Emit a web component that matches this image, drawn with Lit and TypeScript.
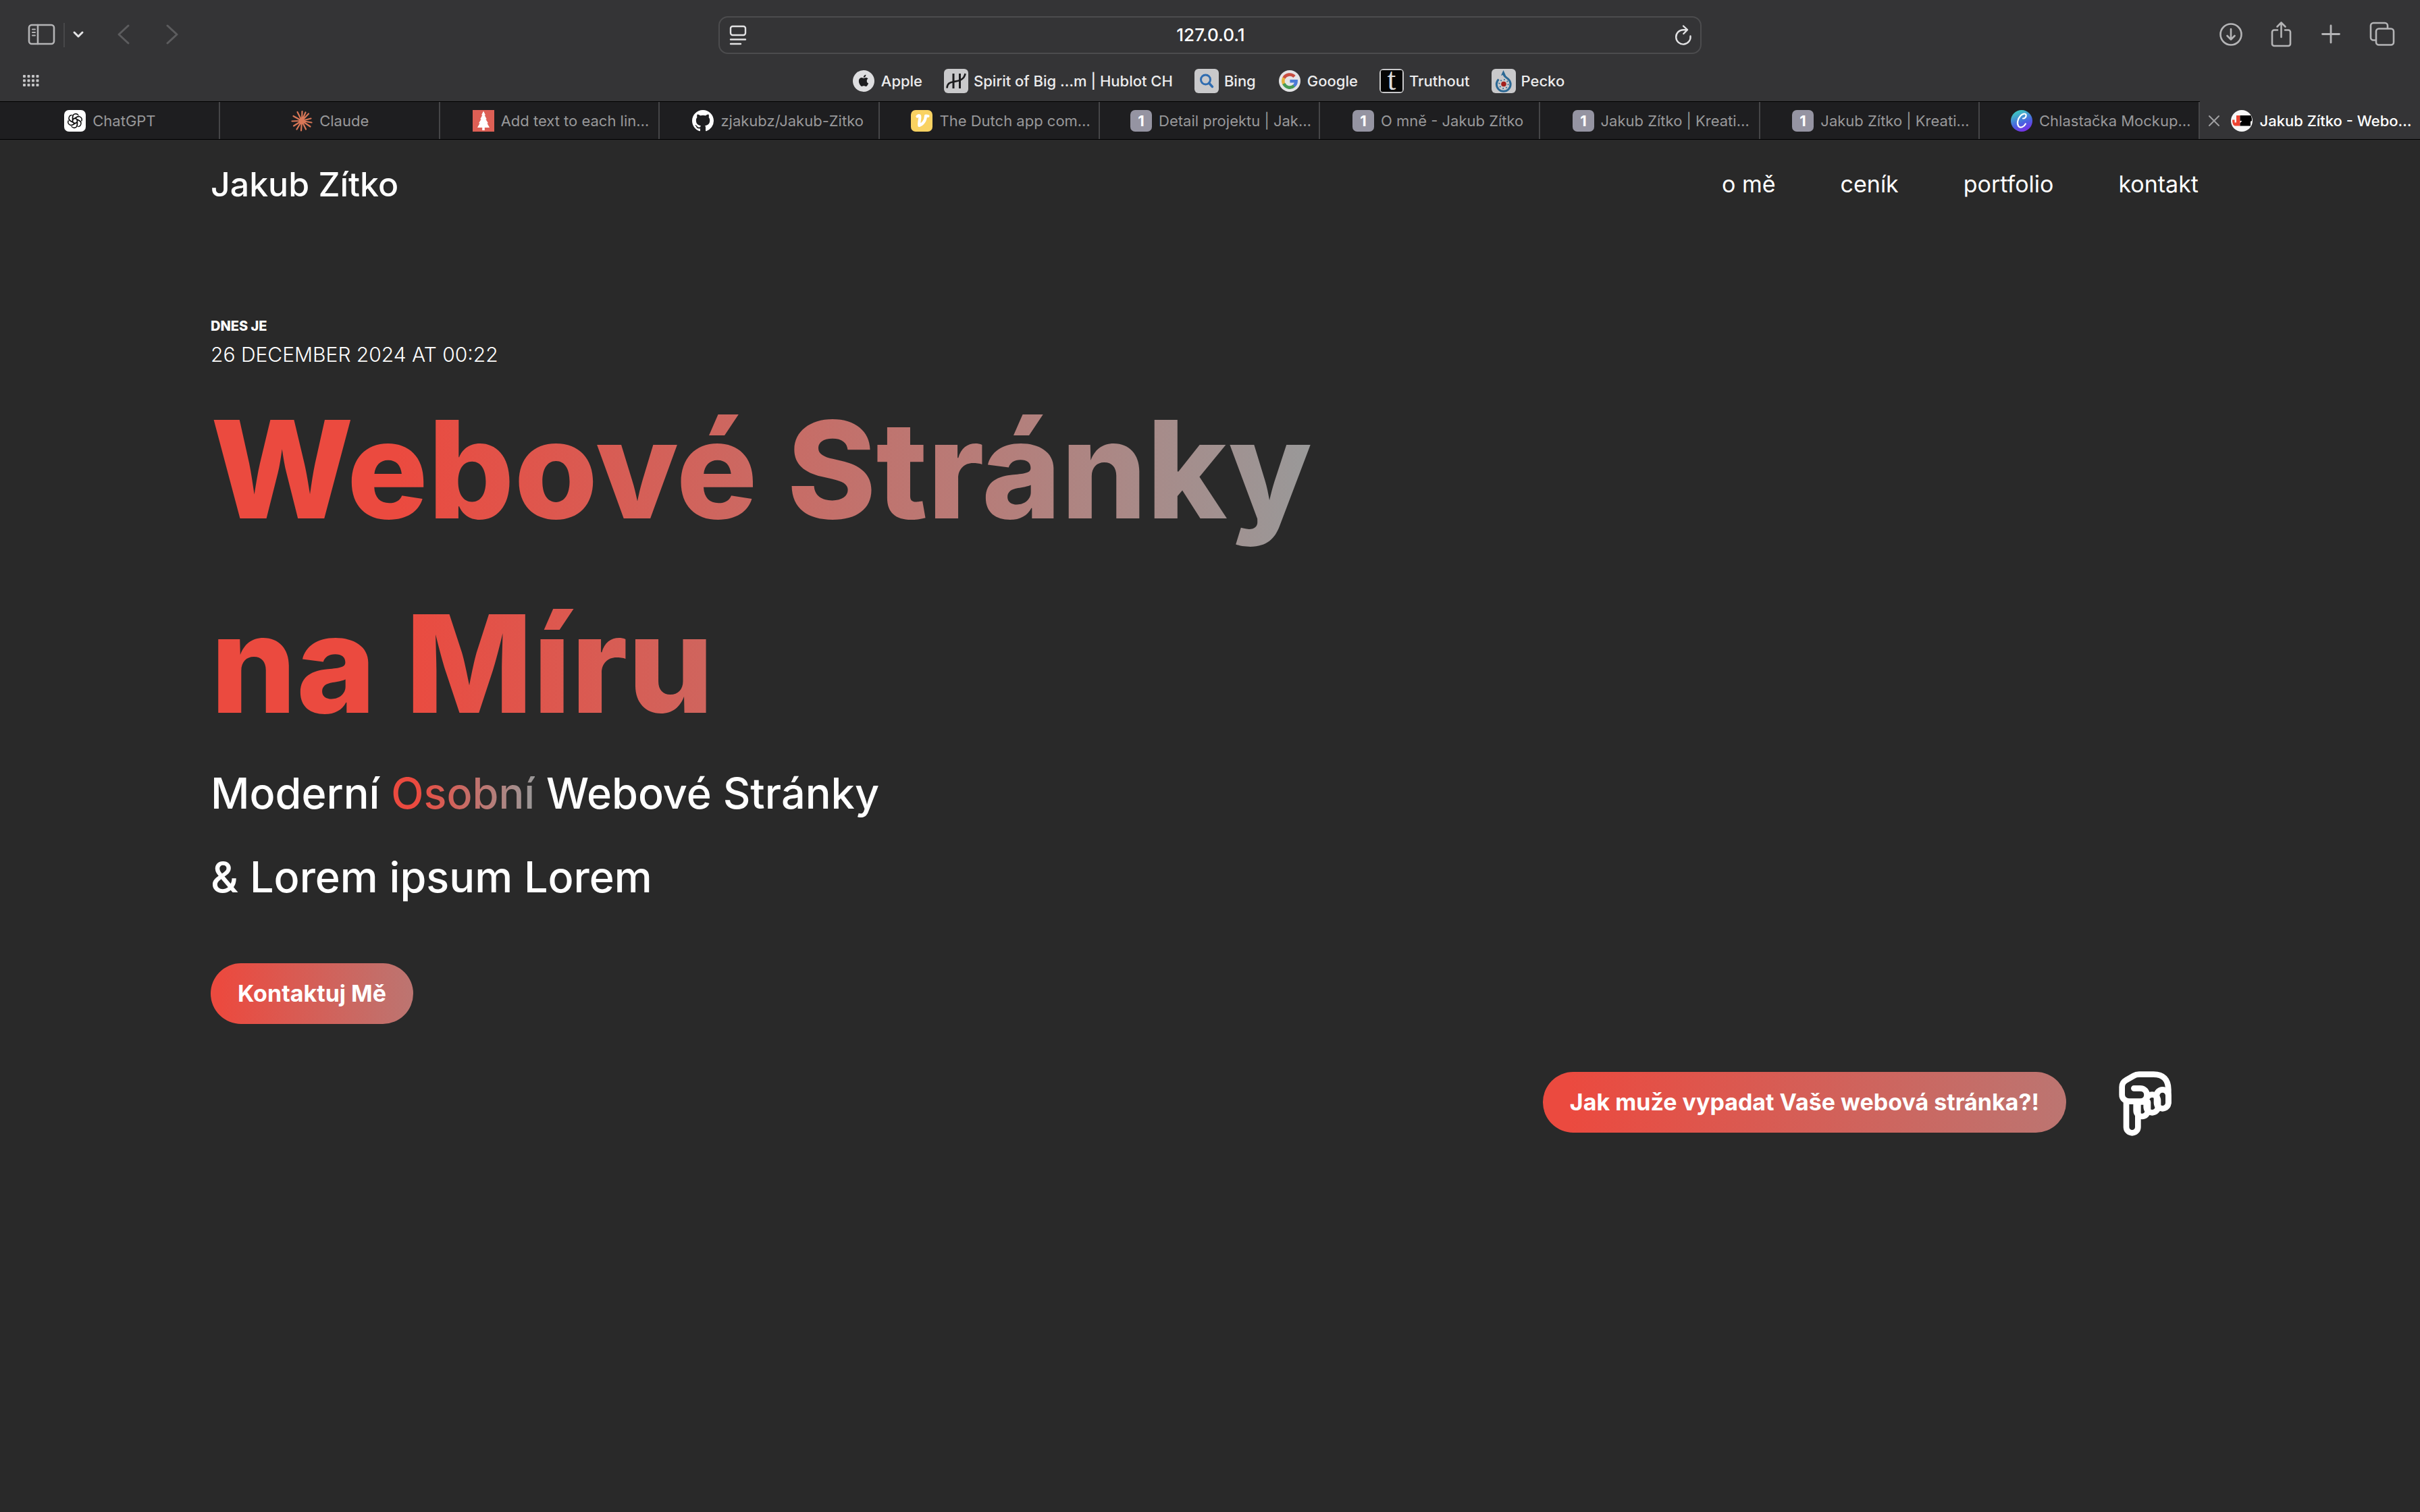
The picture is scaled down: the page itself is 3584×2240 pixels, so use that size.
import { LitElement, html, css, svg } from "lit";
import { customElement } from "lit/decorators.js";

const siteIcons: Record<string, unknown> = {
  chatgpt: svg`<rect width="32" height="32" rx="7" fill="#fff"/>
    <g fill="none" stroke="#111" stroke-width="1.5" stroke-linejoin="round">
      ${[0, 60, 120, 180, 240, 300].map(
        (a) => svg`<path transform="rotate(${a} 16 16)" d="M12.6 18V10.2a4.6 4.6 0 0 1 8.6-2.2M12.6 14l6.7-3.9a4.6 4.6 0 0 1 3.2-.5"/>`,
      )}
    </g>`,
  claude: svg`<g stroke="#d97757" stroke-width="2.2" stroke-linecap="round">
      <path d="M16 16 16.5 2M16 16 9.5 3M16 16 3.5 9M16 16 1.5 16.5M16 16 4 23.5M16 16 8.5 28.5M16 16 15 30.5M16 16 22 28.5M16 16 28.5 24.5M16 16 30.5 18.5M16 16 29.5 12.5M16 16 26 5.5M16 16 21.5 3.5"/>
    </g>`,
  tree: svg`<rect width="32" height="32" fill="#dd5f55"/>
    <path fill="#fff" d="M16 1.500l3 6h-1.400l3.200 6h-1.500l3.700 6h-1.600l3.600 6.500h-7.200v4h-3.600v-4H7l3.600-6.500H9l3.700-6h-1.500l3.200-6H13z"/>`,
  github: svg`<path fill="#fff" transform="scale(2)" d="M8 0C3.580 0 0 3.580 0 8c0 3.540 2.290 6.530 5.470 7.590.4.070.55-.17.55-.38 0-.19-.01-.82-.01-1.490-2.010.37-2.530-.49-2.690-.94-.09-.23-.48-.94-.82-1.130-.28-.15-.68-.52-.01-.53.63-.01 1.080.58 1.230.82.72 1.210 1.870.87 2.330.66.07-.52.28-.87.51-1.070-1.780-.2-3.640-.89-3.640-3.950 0-.87.31-1.590.82-2.150-.08-.2-.36-1.020.08-2.120 0 0 .67-.21 2.200.82.64-.18 1.320-.27 2-.27s1.360.09 2 .27c1.530-1.040 2.200-.82 2.200-.82.44 1.100.16 1.920.08 2.120.51.56.82 1.270.82 2.150 0 3.070-1.870 3.750-3.650 3.950.29.25.54.73.54 1.480 0 1.070-.01 1.930-.01 2.200 0 .21.15.46.55.38A8.010 8.010 0 0 0 16 8c0-4.420-3.580-8-8-8"/>`,
  dutch: svg`<rect width="32" height="32" rx="7" fill="#f9d262"/>
    <path fill="none" stroke="#fff" stroke-width="4.200" stroke-linecap="round" stroke-linejoin="round" d="M9.500 9.500q2-2 3.500-1c1.600 1.200-1.600 9.500-.6 14.500 5-1.500 9.600-7.500 9.600-14.500l3.500.5"/>`,
  one: svg`<rect width="32" height="32" rx="7" fill="#9594a2"/>
    <text x="16" y="24" text-anchor="middle" font-family="Inter, sans-serif" font-weight="700" font-size="22" fill="#fff">1</text>`,
  canva: svg`<defs><linearGradient id="cv" x1="0.300" y1="0" x2="0.700" y2="1">
      <stop offset="0.100" stop-color="#3fbfc5"/><stop offset="0.600" stop-color="#4a62e0"/><stop offset="1" stop-color="#7d2ae8"/></linearGradient></defs>
    <circle cx="16" cy="16" r="16" fill="url(#cv)"/>
    <path fill="none" stroke="#fff" stroke-width="2.200" stroke-linecap="round" d="M18 12.500c3 0 5-2.500 4.600-5-.6-3-5-2.500-8 .8-4.500 4.800-6 12-3.200 15.700 2.600 3.400 8 1.200 10.400-3.500"/>`,
  jz: svg`<circle cx="16" cy="16" r="16" fill="#f7f7f7"/>
    <path fill="#ee4432" d="M8 8h5.500v15.500H6q-4-.5-4-9h3.500v4H8z"/>
    <path fill="#000" d="M13.500 8H29.500Q31 11 31 16l-2 1v6.500H13.500v-4l3-3.500h-3z"/>`,
  apple: svg`<circle cx="18" cy="18" r="16" fill="#dedee0"/>
    <path fill="#1d1d1f" d="M22.700 17.900c0-2.200 1.800-3.200 1.900-3.300-1-1.500-2.600-1.700-3.200-1.700-1.400-.1-2.600.8-3.300.8-.7 0-1.700-.8-2.900-.8-1.500 0-2.800.9-3.600 2.200-1.500 2.600-.4 6.500 1.100 8.700.7 1 1.600 2.200 2.700 2.200s1.500-.7 2.900-.7 1.700.7 2.900.7 2-1.100 2.700-2.100c.8-1.200 1.200-2.400 1.200-2.500-.1 0-2.400-.9-2.400-3.500zM20.500 11.500c.6-.7 1-1.800.9-2.800-.9 0-2 .6-2.600 1.300-.6.700-1.100 1.700-.9 2.700 1 .1 2-.5 2.600-1.200z"/>`,
  hublot: svg`<rect width="36" height="36" rx="6" fill="#c9c9cb"/>
    <path fill="none" stroke="#1c1c1e" stroke-width="3" d="M14 7v22M23.500 7v22"/>
    <path fill="none" stroke="#1c1c1e" stroke-width="2.600" d="M4.500 28.500c.5-7 4-8.500 10-9.500s15.500-2 17-12"/>`,
  bing: svg`<rect width="36" height="36" rx="6" fill="#c9c9cb"/>
    <circle cx="16.500" cy="16" r="7" fill="none" stroke="#2f6cb0" stroke-width="3"/>
    <path stroke="#2f6cb0" stroke-width="3.400" stroke-linecap="round" d="m21.500 21 5 5.500"/>`,
  google: svg`<circle cx="18" cy="18" r="16" fill="#e4e4e6"/>
    <g fill="none" stroke-width="4.600">
      <path stroke="#c84d40" d="M9.400 13.700A9.700 9.700 0 0 1 25 11.500"/>
      <path stroke="#e5b03c" d="M9.600 22.700a9.700 9.700 0 0 1 0-9.400"/>
      <path stroke="#479a54" d="M24.600 25a9.700 9.700 0 0 1-15.300-2.900"/>
      <path stroke="#4a7bd8" d="M18.400 18.300h9.200c0 3-1 5.200-3.200 6.900"/>
    </g>`,
  truthout: svg`<rect width="36" height="36" rx="6" fill="#c9c9cb"/><rect x="2" y="2" width="32" height="32" rx="2" fill="#050505"/>
    <text x="18" y="31" text-anchor="middle" font-family="Liberation Serif, serif" font-size="46" fill="#dcdcdc">t</text>`,
  pecko: svg`<rect width="36" height="36" rx="6" fill="#c9c9cb"/>
    <path fill="none" stroke="#2c6894" stroke-width="3" d="M10.500 15.500A10.400 10.400 0 1 0 25 15.500C21 12 18.500 11 18 8"/>
    <path fill="#2c6894" d="m17.500 2 3.600 8-3.600-1.200L14 10z"/>
    <circle cx="18" cy="22.500" r="6.600" fill="none" stroke="#2c6894" stroke-width="2" stroke-dasharray="1.600 3.580"/>
    <circle cx="18" cy="22.500" r="3.800" fill="#a3201d"/>`,
};

const bookmarks = [
  ["apple", "Apple"],
  ["hublot", "Spirit of Big …m | Hublot CH"],
  ["bing", "Bing"],
  ["google", "Google"],
  ["truthout", "Truthout"],
  ["pecko", "Pecko"],
];

const tabs = [
  ["chatgpt", "ChatGPT"],
  ["claude", "Claude"],
  ["tree", "Add text to each lin…"],
  ["github", "zjakubz/Jakub-Zitko"],
  ["dutch", "The Dutch app com…"],
  ["one", "Detail projektu | Jak…"],
  ["one", "O mně - Jakub Zítko"],
  ["one", "Jakub Zítko | Kreati…"],
  ["one", "Jakub Zítko | Kreati…"],
  ["canva", "Chlastačka Mockup…"],
  ["jz", "Jakub Zítko - Webo…"],
];

@customElement("browser-chrome")
export class BrowserChrome extends LitElement {
  static styles = css`
    :host {
      display: block;
      font-family: Inter, "Liberation Sans", sans-serif;
      color: #ececed;
    }
    button {
      display: flex;
      align-items: center;
      margin: 0;
      padding: 0;
      border: 0;
      background: none;
      color: inherit;
      font: inherit;
    }
    svg {
      display: block;
      flex: none;
      overflow: visible;
    }
    .bars {
      background: #343436;
    }
    .toolbar {
      display: grid;
      grid-template-columns: 1fr 40.6% 1fr;
      align-items: center;
      box-sizing: border-box;
      height: 102px;
      padding-top: 2px;
    }
    .side {
      display: flex;
      align-items: center;
      color: #b4b4b6;
    }
    .left {
      padding-left: 40px;
    }
    .right {
      justify-content: flex-end;
      gap: 32px;
      padding-right: 36px;
    }
    .divider {
      width: 2px;
      height: 36px;
      margin: 0 12px;
      background: #48484a;
    }
    .more {
      color: #e4e4e6;
    }
    .nav {
      display: flex;
      gap: 44px;
      padding-left: 44px;
      color: #5c5c5e;
    }
    .address {
      display: flex;
      align-items: center;
      box-sizing: border-box;
      height: 56px;
      padding: 0 12px;
      border: 2px solid #4c4c4e;
      border-radius: 14px;
      color: #e2e2e4;
    }
    .url {
      flex: 1;
      min-width: 0;
      padding: 0;
      border: 0;
      background: none;
      color: #fff;
      font: 500 26px/32px Inter, "Liberation Sans", sans-serif;
      text-align: center;
      outline: none;
    }
    .bookmarks {
      display: grid;
      grid-template-columns: 1fr auto 1fr;
      align-items: center;
      height: 36px;
      padding: 0 40px 12px 34px;
    }
    .list {
      display: flex;
      gap: 32px;
    }
    .bookmark {
      display: flex;
      align-items: center;
      gap: 8px;
      color: inherit;
      text-decoration: none;
      white-space: nowrap;
      font: 500 22px/28px Inter, "Liberation Sans", sans-serif;
    }
    .tabs {
      display: flex;
      height: 57px;
      background: #1e1e20;
    }
    .tab {
      display: flex;
      flex: 1 1 0;
      align-items: center;
      justify-content: center;
      min-width: 0;
      box-sizing: border-box;
      border: solid #000;
      border-width: 1px 0;
      white-space: nowrap;
      color: #98989a;
      font-size: 22px;
      line-height: 28px;
      box-shadow: inset -2px 0 #454547;
    }
    .tab::before,
    .tab::after {
      content: "";
      flex: 1 1 0;
      min-width: 16px;
    }
    .tab::before {
      min-width: 48px;
    }
    .label {
      padding-left: 10px;
    }
    .current {
      border-top-color: #343436;
      background: #343436;
      box-shadow: none;
      color: #fff;
      font-weight: 500;
    }
    .current::before {
      display: none;
    }
    .close {
      padding: 0 16px;
      color: #a0a0a2;
    }
  `;

  private siteIcon(name: string, size: number) {
    return html`<svg width=${size} height=${size} viewBox="0 0 ${size} ${size}" aria-hidden="true">${siteIcons[name]}</svg>`;
  }

  render() {
    return html`
      <div class="bars">
        <div class="toolbar">
          <div class="side left">
            <button aria-label="Sidebar">
              <svg width="42" height="36" viewBox="0 0 42 36" fill="none" stroke="currentColor" stroke-width="2.600" stroke-linecap="round">
                <rect x="3" y="3" width="37" height="28" rx="4" />
                <path d="M16 3v28" />
                <path d="M8 9.500h4M8 14h4M8 18.500h4" stroke-width="2" />
              </svg>
            </button>
            <span class="divider"></span>
            <button class="more" aria-label="Tab groups">
              <svg width="18" height="14" viewBox="0 0 18 14" fill="none" stroke="currentColor" stroke-width="3" stroke-linecap="round" stroke-linejoin="round"><path d="m2 3 6 6 6-6" /></svg>
            </button>
            <div class="nav">
              <button aria-label="Back">
                <svg width="28" height="36" viewBox="0 0 28 36" fill="none" stroke="currentColor" stroke-width="3" stroke-linecap="round" stroke-linejoin="round"><path d="M20 4 6 17l14 13" /></svg>
              </button>
              <button aria-label="Forward">
                <svg width="28" height="36" viewBox="0 0 28 36" fill="none" stroke="currentColor" stroke-width="3" stroke-linecap="round" stroke-linejoin="round"><path d="m6 4 14 13L6 30" /></svg>
              </button>
            </div>
          </div>
          <div class="address">
            <svg width="28" height="32" viewBox="0 0 28 32" fill="none" stroke="currentColor" stroke-width="2.400" stroke-linecap="round">
              <rect x="4" y="3" width="22" height="13" rx="3" />
              <path d="M4 22.500h22M4 29h15" />
            </svg>
            <input class="url" type="text" aria-label="Address" value="127.0.0.1" />
            <button aria-label="Reload">
              <svg width="26" height="32" viewBox="0 0 26 32" fill="none" stroke="currentColor" stroke-width="2.400" stroke-linecap="round" stroke-linejoin="round">
                <path d="M23.500 17.500A10.700 10.700 0 1 1 13 8.200h5.500M13 2.500l6 5.700-5.700 5.800" />
              </svg>
            </button>
          </div>
          <div class="side right">
            <button aria-label="Downloads">
              <svg width="42" height="42" viewBox="0 0 42 42" fill="none" stroke="currentColor" stroke-width="2.600" stroke-linecap="round" stroke-linejoin="round">
                <circle cx="20" cy="20" r="15.500" /><path d="M20 12v15M14.500 22l5.500 5.500 5.500-5.500" />
              </svg>
            </button>
            <button aria-label="Share">
              <svg width="42" height="42" viewBox="0 0 42 42" fill="none" stroke="currentColor" stroke-width="2.600" stroke-linecap="round" stroke-linejoin="round">
                <path d="M15 13.500h-5a3 3 0 0 0-3 3V34a3 3 0 0 0 3 3h21a3 3 0 0 0 3-3V16.500a3 3 0 0 0-3-3h-5M20.500 24V3M14.500 8.500l6-6 6 6" />
              </svg>
            </button>
            <button aria-label="New tab">
              <svg width="42" height="42" viewBox="0 0 42 42" fill="none" stroke="currentColor" stroke-width="2.800" stroke-linecap="round"><path d="M20 7v25M7.500 19.500h25" /></svg>
            </button>
            <button aria-label="Tab overview">
              <svg width="42" height="42" viewBox="0 0 42 42" fill="none" stroke="currentColor" stroke-width="2.600" stroke-linejoin="round">
                <path d="M13 28.500H9a4 4 0 0 1-4-4V7a4 4 0 0 1 4-4h17a4 4 0 0 1 4 4v4.500" /><rect x="13" y="11.500" width="26" height="24" rx="4" />
              </svg>
            </button>
          </div>
        </div>
        <div class="bookmarks">
          <button aria-label="Favorites">
            <svg width="24" height="18" viewBox="0 0 24 18" fill="#c4c4c6">
              ${[0, 6.5, 13].map((y) => [0, 6.5, 13, 19.5].map((x) => svg`<rect x=${x} y=${y} width="4" height="4" rx="1"/>`))}
            </svg>
          </button>
          <nav class="list" aria-label="Bookmarks">
            ${bookmarks.map(([icon, label]) => html`<a class="bookmark" href="#">${this.siteIcon(icon, 36)}<span>${label}</span></a>`)}
          </nav>
        </div>
      </div>
      <div class="tabs">
        ${tabs.map(([icon, label], i) =>
          i === tabs.length - 1
            ? html`<div class="tab current">
                <button class="close" aria-label="Close tab">
                  <svg width="18" height="18" viewBox="0 0 18 18" fill="none" stroke="currentColor" stroke-width="2" stroke-linecap="round"><path d="m2 2 14 14M16 2 2 16" /></svg>
                </button>
                <button>${this.siteIcon(icon, 32)}<span class="label">${label}</span></button>
              </div>`
            : html`<button class="tab">${this.siteIcon(icon, 32)}<span class="label">${label}</span></button>`,
        )}
      </div>
    `;
  }
}

@customElement("app-root")
export class AppRoot extends LitElement {
  static styles = css`
    :host {
      display: block;
      min-height: 100vh;
      background: #292929;
      color: #fff;
      font-family: Inter, "Open Sans", sans-serif;
    }
    .header,
    .hero {
      padding: 0 328px 0 312px;
    }
    .header {
      display: flex;
      align-items: center;
      justify-content: space-between;
      height: 132px;
    }
    a {
      color: inherit;
      text-decoration: none;
    }
    .logo {
      font-size: 50px;
      font-weight: 500;
      line-height: 64px;
    }
    .menu {
      display: flex;
      gap: 96px;
      font-size: 34px;
      line-height: 48px;
    }
    .hero {
      padding-top: 126px;
    }
    p,
    h1,
    h2 {
      margin: 0;
    }
    .today {
      font-size: 20px;
      font-weight: 800;
      line-height: 36px;
    }
    .date {
      font-size: 30px;
      font-weight: 300;
      line-height: 48px;
    }
    .title {
      width: fit-content;
      padding-top: 2px;
      font-size: 200px;
      font-weight: 800;
      line-height: 288px;
    }
    .fade {
      background: linear-gradient(90deg, #eb4a3f 17%, #999 100%);
      background-clip: text;
      -webkit-background-clip: text;
      color: transparent;
    }
    .subtitle {
      display: flex;
      flex-direction: column;
      gap: 28px;
      font-size: 63px;
      font-weight: 500;
      line-height: 96px;
    }
    .cta {
      width: fit-content;
      height: 90px;
      padding: 0 40px;
      border: 0;
      border-radius: 45px;
      background: linear-gradient(90deg, #eb4a3f 5%, #bc7571 100%);
      color: #fff;
      font: 700 34px/48px Inter, "Open Sans", sans-serif;
    }
    .contact {
      margin-top: 80px;
    }
    .question {
      display: flex;
      align-items: center;
      justify-content: flex-end;
      gap: 50px;
      padding-top: 56px;
    }
    .hand {
      display: block;
    }
  `;

  render() {
    return html`
      <browser-chrome></browser-chrome>
      <header class="header">
        <a class="logo" href="#">Jakub Zítko</a>
        <nav class="menu">
          ${["o mě", "ceník", "portfolio", "kontakt"].map((t) => html`<a href="#">${t}</a>`)}
        </nav>
      </header>
      <main class="hero">
        <p class="today">DNES JE</p>
        <p class="date">26 DECEMBER 2024 AT 00:22</p>
        <h1 class="title fade">Webové Stránky<br />na Míru</h1>
        <h2 class="subtitle">
          <span>Moderní <span class="fade">Osobní</span> Webové Stránky</span>
          <span>&amp; Lorem ipsum Lorem</span>
        </h2>
        <button class="cta contact">Kontaktuj Mě</button>
        <div class="question">
          <button class="cta">Jak muže vypadat Vaše webová stránka?!</button>
          <svg class="hand" width="146" height="120" viewBox="0 0 438 360" fill="none" stroke="#fff" stroke-width="26" stroke-linecap="round" stroke-linejoin="round" role="img" aria-label="Pointing down">
            <path d="M151 118H178C218 118 220 176 178 176H128Q98 170 98 146V112Q98 92 116 82L150 62Q160 56 174 56H238Q303 56 304 124V182" />
            <path d="M117 178V290a26 26 0 0 0 52 0V180" />
            <path d="M162 178H212" />
            <path d="M161 184V217a26 26 0 0 0 52 0V180" />
            <path d="M206 172V200a26 26 0 0 0 52 0V172a26 26 0 0 0-52 0Z" />
            <path d="M252 150V182a26 26 0 0 0 52 0V150a26 26 0 0 0-52 0Z" />
          </svg>
        </div>
      </main>
    `;
  }
}
